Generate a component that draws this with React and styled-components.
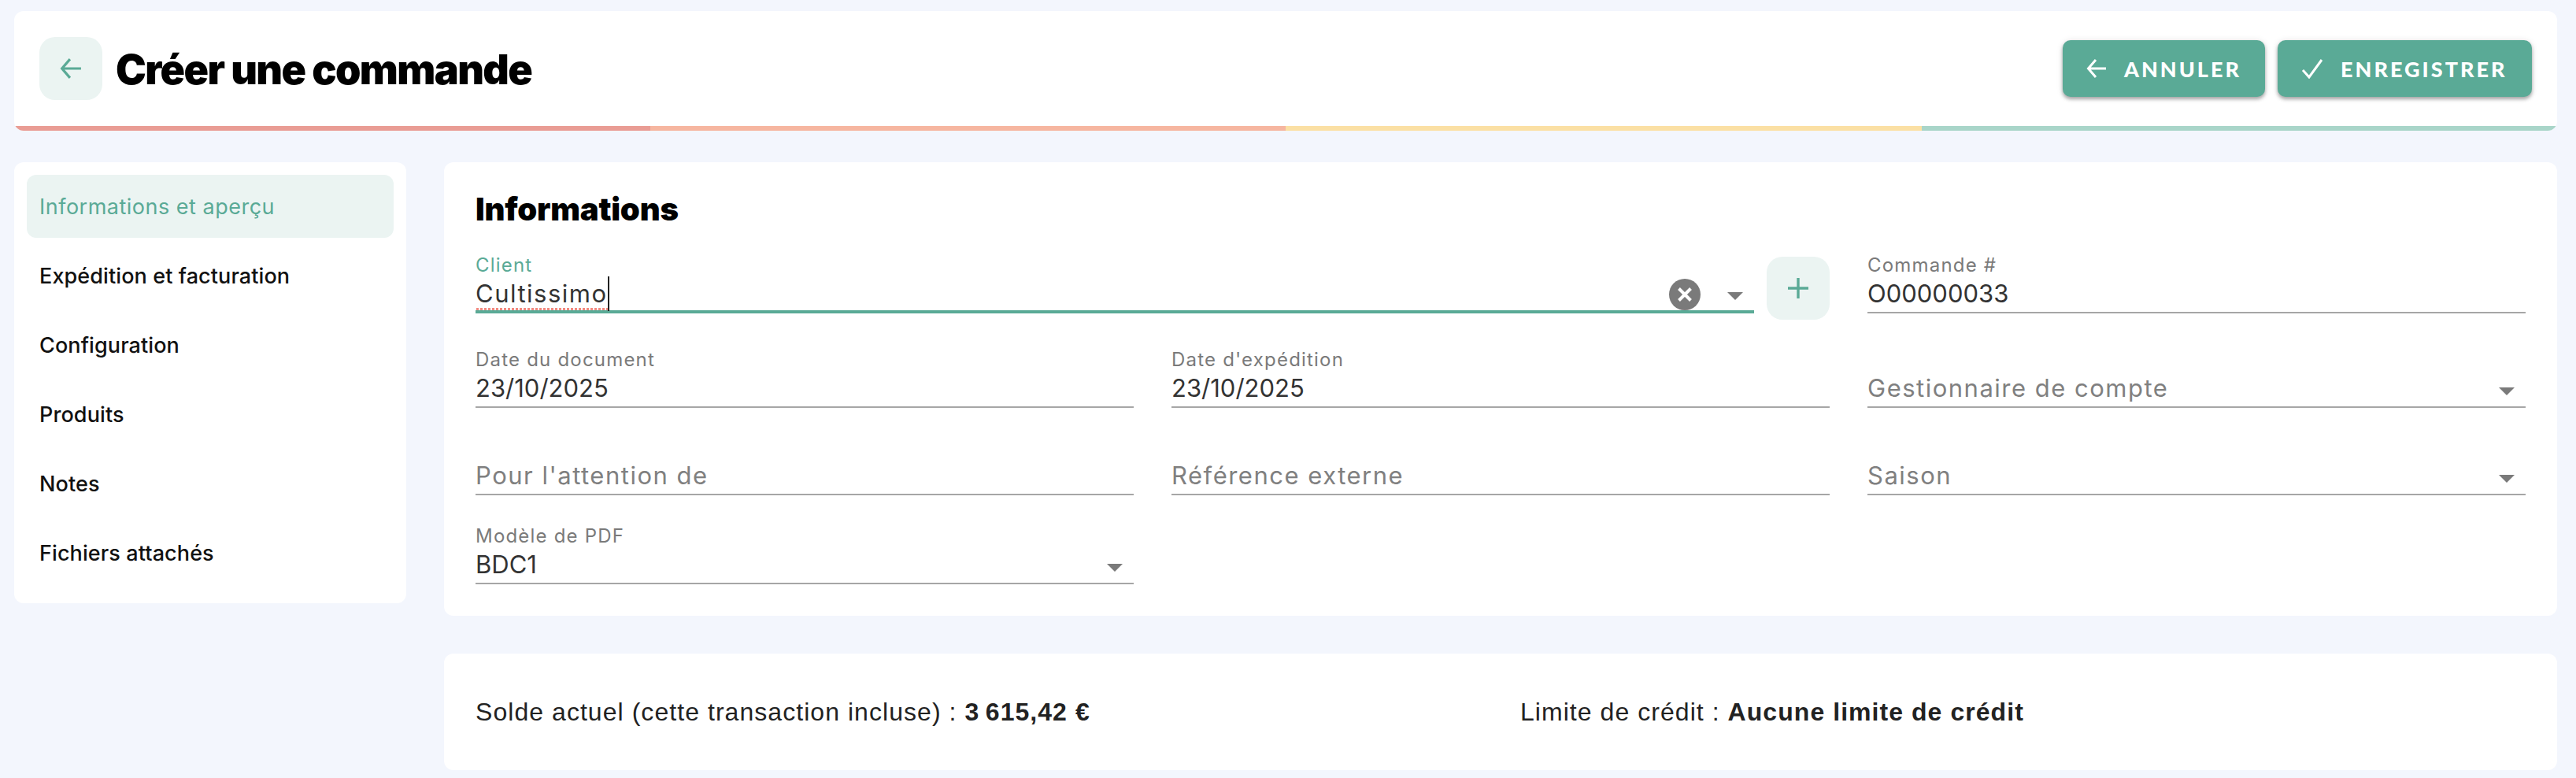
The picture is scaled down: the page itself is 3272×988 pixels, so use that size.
import React from "react";
import styled, { createGlobalStyle } from "styled-components";

const Global = createGlobalStyle`
  html, body { margin: 0; padding: 0; background: #f3f6fd; }
  body { font-family: "Inter", "Liberation Sans", sans-serif; }
  * { box-sizing: border-box; }
`;

const TEAL = "#5aaa96";
const TINT = "#ebf4f2";
const UI = `"Inter", "Open Sans", sans-serif`;

const Page = styled.div`
  width: 3272px; height: 988px; overflow: hidden;
  padding: 14px 24px 0 18px;
  display: flex; flex-direction: column; gap: 40px;
`;
const Header = styled.header`
  background: #fff; border-radius: 12px; overflow: hidden;
  height: 152px; display: flex; flex-direction: column;
`;
const HeaderRow = styled.div`
  flex: 1; display: flex; align-items: center; justify-content: space-between;
  padding: 0 32px;
`;
const TitleGroup = styled.div`display: flex; align-items: center; gap: 17px;`;
const TintButton = styled.button`
  width: 80px; height: 80px; border: 0; border-radius: 20px; background: ${TINT};
  display: flex; align-items: center; justify-content: center; padding: 0; flex: none;
`;
const PageTitle = styled.h1`
  margin: 3px 0 0; font: 900 52px/1 "Inter", sans-serif; color: #000; letter-spacing: -1.6px;
`;
const Actions = styled.div`display: flex; gap: 16px;`;
const PrimaryButton = styled.button`
  height: 72px; width: ${p => p.$w}px; border: 0; border-radius: 10px; background: ${TEAL};
  color: #fff; font: 900 27px/1 "Lato", sans-serif; letter-spacing: 3px; text-transform: uppercase;
  display: flex; align-items: center; gap: 22px; padding: 0 0 0 30px;
  box-shadow: 0 3px 4px rgba(0,0,0,.3), 0 1px 8px rgba(0,0,0,.12);
`;
const Progress = styled.div`display: flex; height: 6px;`;
const Segment = styled.div`flex: 1; background: ${p => p.$c};`;

const Body = styled.div`display: flex; gap: 48px; align-items: flex-start;`;
const Sidebar = styled.nav`
  width: 498px; background: #fff; border-radius: 12px; padding: 16px 16px 24px;
  display: flex; flex-direction: column; gap: 8px; flex: none;
`;
const NavItem = styled.a`
  height: 80px; border-radius: 12px; padding: 0 16px; display: flex; align-items: center;
  font: ${p => (p.$active ? 400 : 450)} 27px/1 ${UI};
  letter-spacing: ${p => (p.$active ? "0.5px" : "0.1px")};
  color: ${p => (p.$active ? TEAL : "#111")};
  background: ${p => (p.$active ? TINT : "transparent")};
`;
const Main = styled.main`flex: 1; display: flex; flex-direction: column; gap: 48px;`;
const Card = styled.section`background: #fff; border-radius: 12px;`;
const FormCard = styled(Card)`height: 576px; padding: 34px 40px 0;`;
const SectionTitle = styled.h2`
  margin: 0 0 34px; height: 52px; font: 900 40px/52px "Inter", sans-serif; color: #000; letter-spacing: -0.2px;
`;
const FormGrid = styled.div`
  display: grid; grid-template-columns: repeat(3, 836px); column-gap: 48px;
  grid-template-rows: 80px 112px 111px 113px; align-items: end;
`;
const ClientCell = styled.div`
  grid-column: span 2; display: flex; gap: 16px; align-items: flex-start; align-self: start;
`;
const Field = styled.div`
  position: relative; display: flex; flex-direction: column; justify-content: flex-end;
  height: 72px; flex: 1; min-width: 0; padding-bottom: 3px;
  align-self: ${p => (p.$top ? "start" : "end")};
  border-bottom: 2px solid ${p => (p.$focused ? TEAL : "#a6a6a6")};
  box-shadow: ${p => (p.$focused ? `inset 0 -2px 0 ${TEAL}` : "none")};
`;
const Label = styled.label`
  font: 400 24px/30px ${UI}; color: ${p => (p.$focused ? TEAL : "#7a7a7a")}; letter-spacing: 1.2px;
  margin-bottom: 1px;
`;
const Value = styled.div`
  font: 400 31px/40px ${UI}; color: ${p => (p.$ph ? "#808080" : "#333")};
  letter-spacing: ${p => (p.$ph ? "1.5px" : "0")};
  white-space: nowrap;
`;
const Misspelled = styled.span`
  position: relative; display: inline-block; letter-spacing: 1.5px;
  &::before {
    content: ""; position: absolute; left: 0; right: 0; bottom: -1px; height: 3px;
    background: radial-gradient(circle, #f08a80 1.5px, transparent 1.7px) 0 0 / 5px 3px repeat-x;
  }
  &::after {
    content: ""; position: absolute; right: -2px; top: -2px; bottom: -2px; width: 2px; background: #222;
  }
`;
const Adornments = styled.div`
  position: absolute; right: 14px; bottom: 2px; display: flex; align-items: center; gap: 34px;
`;
const Caret = styled.div`
  position: absolute; right: 14px; bottom: 14px; width: 0; height: 0;
  border-left: 10px solid transparent; border-right: 10px solid transparent; border-top: 10px solid #7a7a7a;
`;
const InlineCaret = styled.div`
  width: 0; height: 0; margin-top: 4px;
  border-left: 10px solid transparent; border-right: 10px solid transparent; border-top: 10px solid #7a7a7a;
`;
const BalanceCard = styled(Card)`
  height: 148px; padding: 0 40px; display: grid; grid-template-columns: 1fr 1fr; column-gap: 50px; align-items: center;
`;
const BalanceText = styled.div`
  font: 400 32px/1 "Liberation Sans", Arial, sans-serif; color: #222; letter-spacing: 1.05px;
  strong { font-weight: 700; }
`;

const Arrow = ({ color, size = 26 }) => (
  <svg width={size} height={size} viewBox="0 0 26 26" fill="none" stroke={color} strokeWidth="3">
    <path d="M25 13H3M12 2 2.5 13 12 24" />
  </svg>
);
const Check = () => (
  <svg width="28" height="26" viewBox="0 0 28 26" fill="none" stroke="#fff" strokeWidth="3">
    <path d="M2 15l8 9L26 2" />
  </svg>
);
const Plus = () => (
  <svg width="26" height="26" viewBox="0 0 26 26" fill="none" stroke={TEAL} strokeWidth="3.4">
    <path d="M13 0v26M0 13h26" />
  </svg>
);
const Clear = () => (
  <svg width="40" height="40" viewBox="0 0 40 40">
    <circle cx="20" cy="20" r="20" fill="#7a7a7a" />
    <path d="M12.5 12.5l15 15M27.5 12.5l-15 15" stroke="#fff" strokeWidth="4" />
  </svg>
);

const nav = ["Informations et aperçu", "Expédition et facturation", "Configuration", "Produits", "Notes", "Fichiers attachés"];

export default function App() {
  return (
    <Page>
      <Global />
      <Header>
        <HeaderRow>
          <TitleGroup>
            <TintButton aria-label="Retour"><Arrow color={TEAL} size={28} /></TintButton>
            <PageTitle>Créer une commande</PageTitle>
          </TitleGroup>
          <Actions>
            <PrimaryButton $w={257}><Arrow color="#fff" />Annuler</PrimaryButton>
            <PrimaryButton $w={323}><Check />Enregistrer</PrimaryButton>
          </Actions>
        </HeaderRow>
        <Progress>
          <Segment $c="#e99c94" />
          <Segment $c="#f6b6a0" />
          <Segment $c="#fbe0a4" />
          <Segment $c="#a9d5c9" />
        </Progress>
      </Header>
      <Body>
        <Sidebar>
          {nav.map((n, i) => <NavItem key={n} $active={i === 0}>{n}</NavItem>)}
        </Sidebar>
        <Main>
          <FormCard>
            <SectionTitle>Informations</SectionTitle>
            <FormGrid>
              <ClientCell>
                <Field $focused $top>
                  <Label $focused>Client</Label>
                  <Value><Misspelled>Cultissimo</Misspelled></Value>
                  <Adornments><Clear /><InlineCaret /></Adornments>
                </Field>
                <TintButton aria-label="Ajouter"><Plus /></TintButton>
              </ClientCell>
              <Field $top><Label>Commande #</Label><Value>O00000033</Value></Field>

              <Field><Label>Date du document</Label><Value>23/10/2025</Value></Field>
              <Field><Label>Date d'expédition</Label><Value>23/10/2025</Value></Field>
              <Field><Value $ph>Gestionnaire de compte</Value><Caret /></Field>

              <Field><Value $ph>Pour l'attention de</Value></Field>
              <Field><Value $ph>Référence externe</Value></Field>
              <Field><Value $ph>Saison</Value><Caret /></Field>

              <Field><Label>Modèle de PDF</Label><Value>BDC1</Value><Caret /></Field>
            </FormGrid>
          </FormCard>
          <BalanceCard>
            <BalanceText>Solde actuel (cette transaction incluse) : <strong>3{"\u202f"}615,42 €</strong></BalanceText>
            <BalanceText>Limite de crédit : <strong>Aucune limite de crédit</strong></BalanceText>
          </BalanceCard>
        </Main>
      </Body>
    </Page>
  );
}
